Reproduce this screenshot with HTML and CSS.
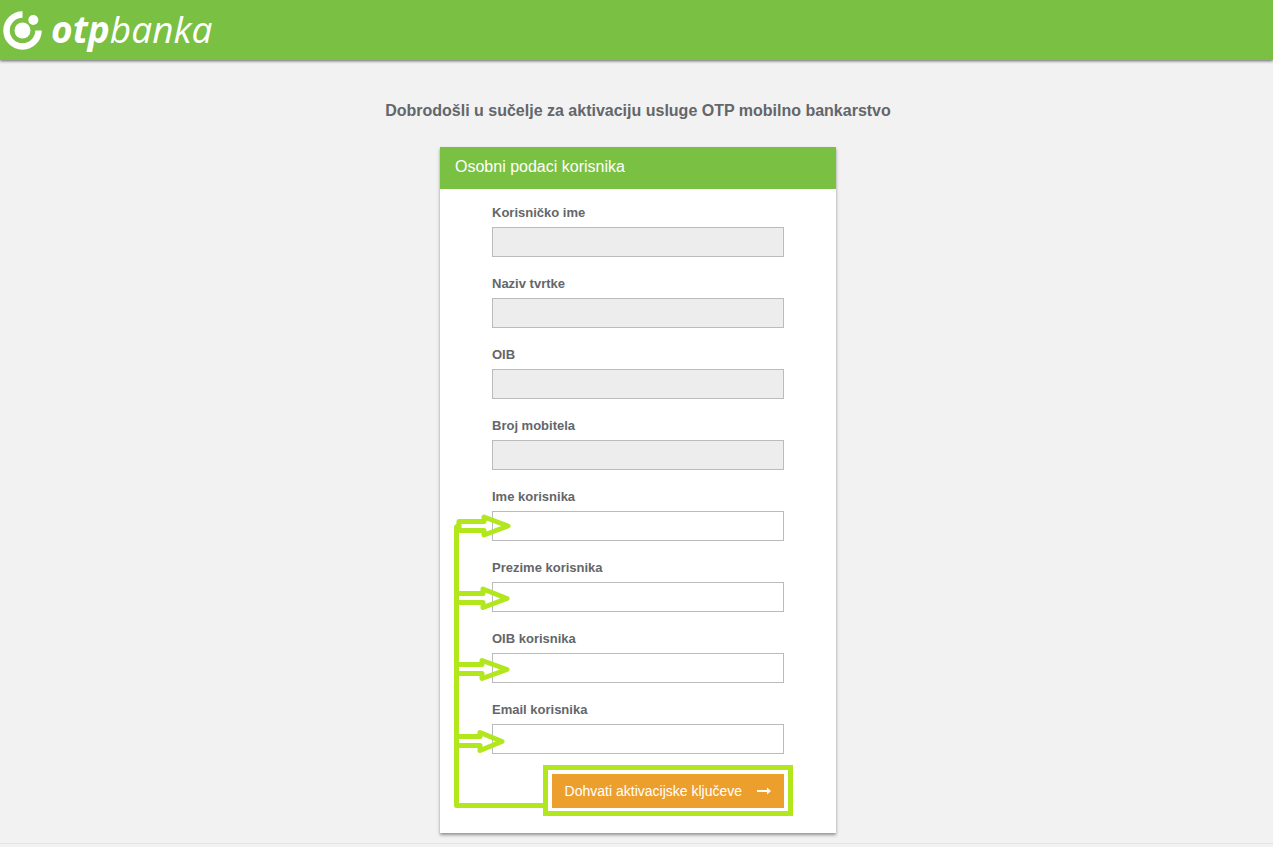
FILE: index.html
```
<!DOCTYPE html>
<html lang="hr">
<head>
    <meta charset="UTF-8">
    <meta name="viewport" content="width=device-width, initial-scale=1.0">
    <title>OTP banka</title>
    <link rel="stylesheet" href="styles.css">
</head>
<body>

<header class="topbar">
    <a href="#" class="logo">
        <svg class="logo-mark" viewBox="0 0 40 40" aria-hidden="true">
            <path d="M19.500 4.500 A16 16 0 1 0 35.500 20.500" fill="none" stroke="#fff" stroke-width="6.500"/>
            <circle cx="19.500" cy="20.500" r="8" fill="#fff"/>
            <circle cx="30.300" cy="10" r="5" fill="#fff"/>
        </svg>
        <span class="logo-text"><b>otp</b>banka</span>
    </a>
</header>

<main class="content">
    <h1>Dobrodošli u sučelje za aktivaciju usluge OTP mobilno bankarstvo</h1>

    <section class="card">
        <h2>Osobni podaci korisnika</h2>
        <form class="user-form">
            <div class="form-group">
                <label for="username">Korisničko ime</label>
                <input type="text" id="username" disabled>
            </div>
            <div class="form-group">
                <label for="company">Naziv tvrtke</label>
                <input type="text" id="company" disabled>
            </div>
            <div class="form-group">
                <label for="company-oib">OIB</label>
                <input type="text" id="company-oib" disabled>
            </div>
            <div class="form-group">
                <label for="phone">Broj mobitela</label>
                <input type="text" id="phone" disabled>
            </div>
            <div class="form-group">
                <label for="first-name">Ime korisnika</label>
                <input type="text" id="first-name">
            </div>
            <div class="form-group">
                <label for="last-name">Prezime korisnika</label>
                <input type="text" id="last-name">
            </div>
            <div class="form-group">
                <label for="user-oib">OIB korisnika</label>
                <input type="text" id="user-oib">
            </div>
            <div class="form-group">
                <label for="email">Email korisnika</label>
                <input type="email" id="email">
            </div>
            <button type="button" class="submit">
                Dohvati aktivacijske ključeve
                <svg class="arrow" viewBox="0 0 14 10" aria-hidden="true">
                    <path d="M0 4h10V1.500l4 3.500-4 3.500V6H0z" fill="#fff"/>
                </svg>
            </button>
        </form>

        <!-- Guide: required fields, then the button -->
        <svg class="guide" viewBox="0 0 396 686" aria-hidden="true">
            <path d="M19 378 L16.500 380 V658.500 H105"/>
            <path d="M17 383.500 H44 V388 L68 379 L44 370 V374.500 H19 V383"/>
            <path d="M17 446.500 H43 V442 L67 451.500 L43 460.500 V455.500 H17"/>
            <path d="M17 517.500 H42 V513.500 L67 522.500 L42 531.500 V526.500 H17"/>
            <path d="M17 589.500 H40 V585.500 L62 594.500 L40 603.500 V598.500 H17"/>
            <rect class="guide-frame" x="105.500" y="620.500" width="245" height="46"/>
        </svg>
    </section>
</main>

<footer class="footer"></footer>

</body>
</html>
```

FILE: styles.css
```
body {
    margin: 0;
    font-family: "Liberation Sans", Arial, sans-serif;
    color: #63666a;
    background: #f2f2f2;
}
.topbar {
    display: flex;
    height: 60px;
    align-items: center;
    background: #7ac043;
    box-shadow: 0 1px 3px rgba(0,0,0,0.6);
}
.logo {
    display: flex;
    align-items: center;
    gap: 8px;
    padding-left: 3px;
    color: #fff;
    text-decoration: none;
}
.logo-mark {
    width: 40px;
    height: 40px;
}
.logo-text {
    padding-bottom: 2px;
    font-family: "Open Sans", sans-serif;
    font-size: 37px;
    line-height: 58px;
    font-weight: 500;
    font-style: italic;
}
.content {
    padding: 41px 0 0 3px;
}
h1 {
    margin: 0 0 26px;
    font-size: 16px;
    line-height: 20px;
    text-align: center;
}
.card {
    position: relative;
    width: 396px;
    margin: 0 auto;
    background: #fff;
    box-shadow: 0 2px 3px rgba(0,0,0,0.4);
}
h2 {
    margin: 0;
    padding: 10px 15px 12px;
    font-size: 16px;
    line-height: 20px;
    font-weight: normal;
    color: #fff;
    background: #7ac043;
}
.user-form {
    display: flex;
    flex-direction: column;
    padding: 16px 52px 25px;
}
.form-group {
    display: flex;
    flex-direction: column;
    gap: 7px;
    margin-bottom: 19px;
}
label {
    font-size: 13px;
    line-height: 15px;
    font-weight: bold;
}
input {
    box-sizing: border-box;
    width: 100%;
    height: 30px;
    padding: 4px 8px;
    border: 1px solid #b9bbbf;
    border-radius: 0;
    background: #fff;
}
input:disabled {
    background: #ededed;
}
.submit {
    display: flex;
    align-self: flex-end;
    align-items: center;
    gap: 15px;
    height: 34px;
    margin-top: 1px;
    padding: 0 13px;
    border: 0;
    font-family: inherit;
    font-size: 14px;
    color: #fff;
    background: #ed9f2d;
    cursor: pointer;
}
.arrow {
    width: 14px;
    height: 10px;
}
.guide {
    position: absolute;
    top: 0;
    left: 0;
    width: 100%;
    height: 100%;
    fill: none;
    stroke: #b2e61d;
    stroke-width: 5;
    stroke-linejoin: round;
    pointer-events: none;
}
.guide-frame {
    stroke-linejoin: miter;
}
.footer {
    margin-top: 10px;
    border-top: 1px solid #e5e5e5;
}
```
